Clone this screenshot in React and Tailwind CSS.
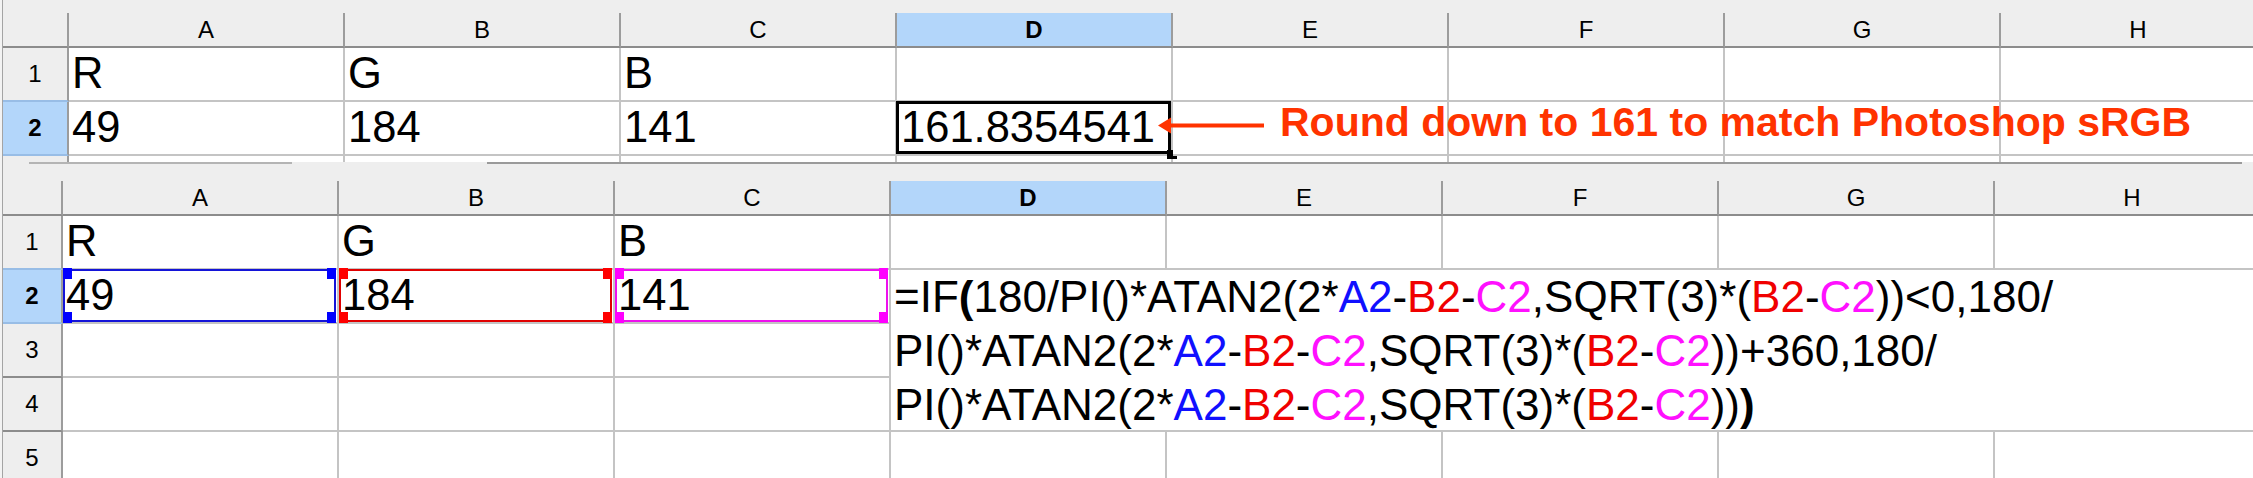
import React from "react";

const COLS = ["A", "B", "C", "D", "E", "F", "G", "H"];
const BLUE = "text-[#1010ff]";
const RED = "text-[#f00000]";
const MAG = "text-[#ff10ff]";

function ColHeader({ label, active }) {
  return (
    <div
      className={
        active
          ? "flex items-center justify-center border-r-2 border-b-2 border-r-[#9c9c9c] border-b-[#8c8c8c] bg-[#b3d6fa] font-bold text-[24px] leading-[24px] text-black"
          : "flex items-center justify-center border-r-2 border-b-2 border-r-[#9c9c9c] border-b-[#8c8c8c] bg-[#eeeeee] text-[24px] leading-[24px] text-black"
      }
    >
      {label}
    </div>
  );
}

function RowHeader({ label, active, dark }) {
  let cls =
    "flex items-center justify-center border-r-2 border-b-2 border-r-[#9c9c9c] text-[24px] leading-[24px] text-black ";
  if (active) cls += "bg-[#b3d6fa] font-bold border-b-[#98bde6]";
  else if (dark) cls += "bg-[#eeeeee] border-b-[#8c8c8c]";
  else cls += "bg-[#eeeeee] border-b-[#98bde6]";
  return <div className={cls}>{label}</div>;
}

function Cell({ children, className = "" }) {
  return (
    <div
      className={
        "relative flex items-center bg-white border-r-2 border-b-2 border-[#c4c4c4] pl-[3px] text-[43.5px] leading-[43.5px] whitespace-nowrap text-black " +
        className
      }
    >
      {children}
    </div>
  );
}

function RefBox({ color }) {
  const styles = {
    blue: ["border-[#1414d8]", "bg-[#0000ff]"],
    red: ["border-[#e00000]", "bg-[#ff0000]"],
    mag: ["border-[#ee10ee]", "bg-[#ff00ff]"],
  }[color];
  return (
    <div className={"absolute left-0 -top-[1px] w-[273px] h-[53px] border-2 " + styles[0]}>
      <div className={"absolute -left-[2px] -top-[3px] w-[9px] h-[11px] " + styles[1]} />
      <div className={"absolute -right-[2px] -top-[3px] w-[9px] h-[11px] " + styles[1]} />
      <div className={"absolute -left-[2px] -bottom-[3px] w-[9px] h-[11px] " + styles[1]} />
      <div className={"absolute -right-[2px] -bottom-[3px] w-[9px] h-[11px] " + styles[1]} />
    </div>
  );
}

function TopPanel() {
  return (
    <div className="pt-[13px]">
      <div className="grid grid-cols-[66px_repeat(8,276px)] grid-rows-[35px_54px_54px_6px]">
        <div className="border-r-2 border-b-2 border-r-[#9c9c9c] border-b-[#8c8c8c] bg-[#eeeeee]" />
        {COLS.map((c) => (
          <ColHeader key={c} label={c} active={c === "D"} />
        ))}

        <RowHeader label="1" />
        <Cell>R</Cell>
        <Cell>G</Cell>
        <Cell>B</Cell>
        <Cell />
        <Cell />
        <Cell />
        <Cell />
        <Cell />

        <RowHeader label="2" active />
        <Cell>49</Cell>
        <Cell>184</Cell>
        <Cell>141</Cell>
        <Cell className="pl-0">
          <div className="absolute -left-[1px] -top-[1px] right-0 bottom-0 border-[3px] border-black" />
          <div className="absolute left-[270px] top-[48px] w-[10px] h-[9px] bg-black" />
          <span className="relative pl-[1px]">161.8354541</span>
        </Cell>
        <Cell />
        <Cell />
        <Cell />
        <Cell />

        <div className="border-r-2 border-r-[#9c9c9c] bg-[#eeeeee]" />
        {COLS.map((c) => (
          <div key={c} className="bg-white border-r-2 border-[#c4c4c4]" />
        ))}
      </div>
      <div className="flex h-[2px]">
        <div className="w-[26px]" />
        <div className="w-[263px] bg-[#b4b4b4]" />
        <div className="w-[195px]" />
        <div className="w-[1755px] bg-[#9a9a9a]" />
      </div>
    </div>
  );
}

function Formula() {
  return (
    <div className="col-start-5 col-span-5 row-start-3 row-span-3 bg-white border-b-2 border-[#c4c4c4] pl-[3px] text-[44px] leading-[54px] whitespace-nowrap text-black">
      <div>
        =IF<span className="font-bold">(</span>180/PI()*ATAN2(2*<span className={BLUE}>A2</span>-
        <span className={RED}>B2</span>-<span className={MAG}>C2</span>,SQRT(3)*(
        <span className={RED}>B2</span>-<span className={MAG}>C2</span>))&lt;0,180/
      </div>
      <div>
        PI()*ATAN2(2*<span className={BLUE}>A2</span>-<span className={RED}>B2</span>-
        <span className={MAG}>C2</span>,SQRT(3)*(<span className={RED}>B2</span>-
        <span className={MAG}>C2</span>))+360,180/
      </div>
      <div>
        PI()*ATAN2(2*<span className={BLUE}>A2</span>-<span className={RED}>B2</span>-
        <span className={MAG}>C2</span>,SQRT(3)*(<span className={RED}>B2</span>-
        <span className={MAG}>C2</span>))<span className="font-bold">)</span>
      </div>
    </div>
  );
}

function BottomPanel() {
  const ticks = [44, 52, 52, 52, 52];
  return (
    <div className="flex">
      <div className="w-[9px] flex flex-col">
        {ticks.map((h, i) => (
          <React.Fragment key={i}>
            <div style={{ height: h }} />
            <div className="h-[2px] bg-[#8c8c8c]" />
          </React.Fragment>
        ))}
      </div>
      <div className="mt-[17px] grid grid-cols-[60px_repeat(8,276px)] grid-rows-[35px_repeat(5,54px)]">
        <div className="border-r-2 border-b-2 border-r-[#9c9c9c] border-b-[#8c8c8c] bg-[#eeeeee]" />
        {COLS.map((c) => (
          <ColHeader key={c} label={c} active={c === "D"} />
        ))}

        <RowHeader label="1" />
        <Cell>R</Cell>
        <Cell>G</Cell>
        <Cell>B</Cell>
        <Cell />
        <Cell />
        <Cell />
        <Cell />
        <Cell />

        <Formula />

        <RowHeader label="2" active />
        <Cell>
          <RefBox color="blue" />
          <span className="relative">49</span>
        </Cell>
        <Cell>
          <RefBox color="red" />
          <span className="relative">184</span>
        </Cell>
        <Cell>
          <RefBox color="mag" />
          <span className="relative">141</span>
        </Cell>

        <RowHeader label="3" dark />
        <Cell />
        <Cell />
        <Cell />

        <RowHeader label="4" dark />
        <Cell />
        <Cell />
        <Cell />

        <RowHeader label="5" dark />
        <Cell />
        <Cell />
        <Cell />
        <Cell />
        <Cell />
        <Cell />
        <Cell />
        <Cell />
      </div>
    </div>
  );
}

export default function App() {
  return (
    <div className="relative w-[2253px] h-[478px] overflow-hidden bg-[#eeeeee] flex font-['Liberation_Sans',Arial,sans-serif]">
      <div className="w-[2px] h-full bg-[#f3f3f3]" />
      <div className="w-[1px] h-full bg-[#a4a4a4]" />
      <div className="flex-1 min-w-0 overflow-hidden">
        <TopPanel />
        <BottomPanel />
      </div>

      <svg
        className="absolute left-[1156px] top-[115px]"
        width="110"
        height="21"
        viewBox="0 0 110 21"
      >
        <polygon points="2,10.5 15,2.5 15,18.5" fill="#ff3300" />
        <rect x="14" y="8.5" width="94" height="4" fill="#ff3300" />
      </svg>

      <div className="absolute left-[1280px] top-[102px] text-[41px] leading-[41px] font-bold text-[#ff3300] whitespace-nowrap">
        Round down to 161 to match Photoshop sRGB
      </div>
    </div>
  );
}
